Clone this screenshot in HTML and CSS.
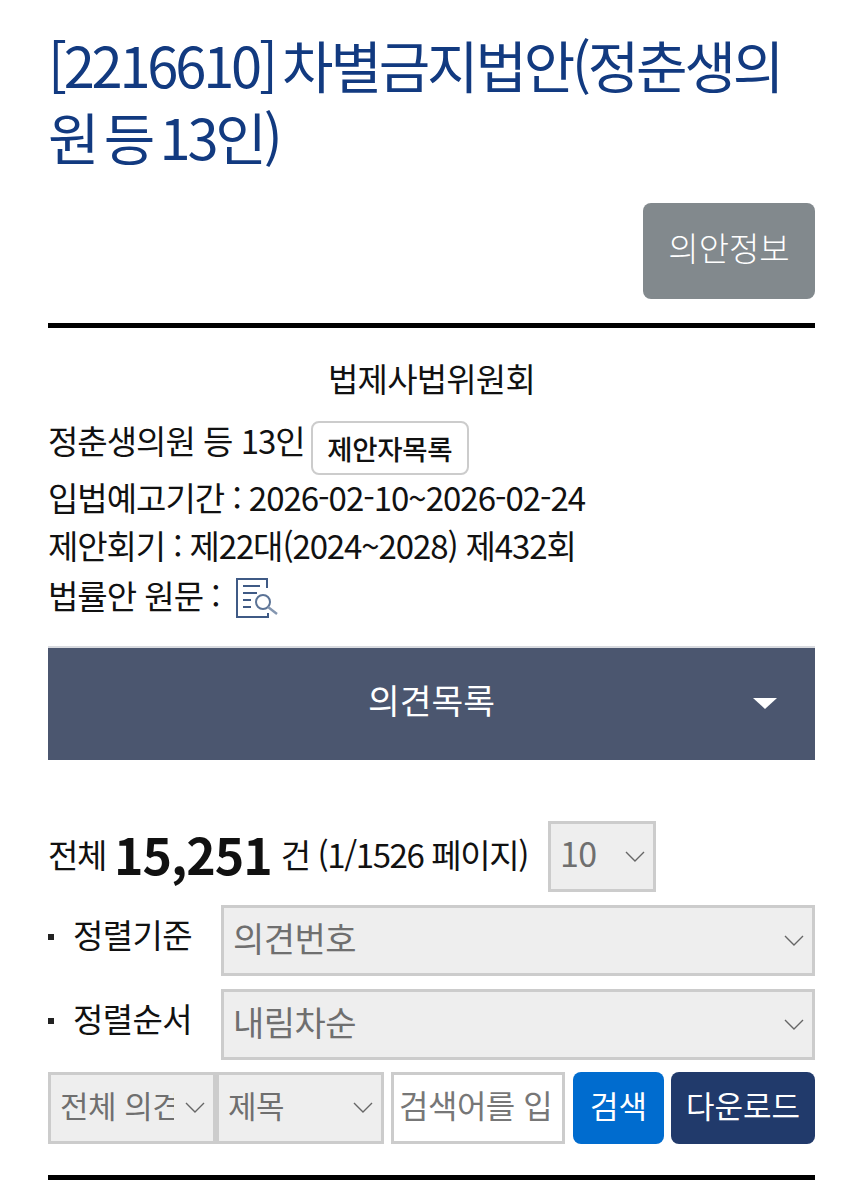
FILE: index.html
```html
<!DOCTYPE html>
<html lang="ko">
<head>
    <meta charset="UTF-8">
    <meta name="viewport" content="width=device-width, initial-scale=1.0">
    <title>차별금지법안</title>
    <link rel="stylesheet" href="styles.css">
</head>
<body>
    <div class="container">
        <h1 class="bill-title">[2216610] 차별금지법안(정춘생의원 등 13인)</h1>
        <div class="title-actions">
            <a class="btn-info">의안정보</a>
        </div>
        <div class="bill-summary">
            <p class="committee">법제사법위원회</p>
            <p class="row-proposer">정춘생의원 등 13인 <button class="btn-proposers">제안자목록</button></p>
            <p class="row-period">입법예고기간 : 2026-02-10~2026-02-24</p>
            <p class="row-session">제안회기 : 제22대(2024~2028) 제432회</p>
            <p class="row-source">법률안 원문 :
                <svg class="doc-icon" width="42" height="40" viewBox="0 0 42 40" fill="none">
                    <path d="M31 10V1H1v38h31v-4" stroke="#3f5a85" stroke-width="2"/>
                    <path d="M7 8h17M7 15h14M7 22h8M7 29h8" stroke="#3f5a85" stroke-width="2"/>
                    <circle cx="27" cy="24" r="7" stroke="#5b7396" stroke-width="2"/>
                    <path d="M32 29l9 7" stroke="#8496b0" stroke-width="2.4"/>
                </svg>
            </p>
        </div>
        <div class="opinion-bar">
            <span>의견목록</span>
            <i class="bar-arrow"></i>
        </div>
        <div class="total-row">
            <span class="total-text">전체</span>
            <strong class="total-count">15,251</strong>
            <span class="total-text">건 (1/1526 페이지)</span>
            <select class="field field-size"><option>10</option></select>
        </div>
        <div class="sort-row">
            <label class="sort-label">정렬기준</label>
            <select class="field field-wide"><option>의견번호</option></select>
        </div>
        <div class="sort-row">
            <label class="sort-label">정렬순서</label>
            <select class="field field-wide"><option>내림차순</option></select>
        </div>
        <div class="search-row">
            <select class="field field-kind"><option>전체 의견</option></select>
            <select class="field field-target"><option>제목</option></select>
            <input class="field field-query" type="text" placeholder="검색어를 입력하세요">
            <button class="btn-search">검색</button>
            <button class="btn-download">다운로드</button>
        </div>
        <div class="bottom-rule"></div>
    </div>
</body>
</html>
```

FILE: styles.css
```css
* {
    box-sizing: border-box;
}
body {
    margin: 0;
    background: #fff;
    color: #111;
    font-family: "Noto Sans CJK KR", "Noto Sans", sans-serif;
}
p {
    margin: 0;
}
.container {
    padding: 28px 48px 0;
    height: 1200px;
    overflow: hidden;
}
.bill-title {
    margin: 0;
    font-size: 56px;
    font-weight: 400;
    line-height: 72px;
    letter-spacing: -3.2px;
    word-spacing: -5px;
    color: #123a80;
}
.title-actions {
    display: flex;
    justify-content: flex-end;
    margin-top: 31px;
}
.btn-info {
    width: 172px;
    height: 96px;
    padding-bottom: 8px;
    display: flex;
    align-items: center;
    justify-content: center;
    background: #82898d;
    border-radius: 8px;
    color: #fff;
    font-size: 33px;
    font-weight: 300;
}
.bill-summary {
    margin-top: 24px;
    border-top: 5px solid #000;
    padding-top: 26px;
    font-size: 33px;
    letter-spacing: -1px;
}
.committee {
    text-align: center;
    line-height: 48px;
    letter-spacing: -0.8px;
    margin-bottom: 12px;
}
.row-proposer {
    display: flex;
    align-items: center;
    gap: 6px;
    height: 52px;
}
.btn-proposers {
    width: 158px;
    height: 54px;
    margin-top: 16px;
    background: #fff;
    border: 2px solid #ccc;
    border-radius: 8px;
    font-family: inherit;
    font-size: 27.5px;
    font-weight: 500;
    letter-spacing: -0.3px;
    color: #111;
    padding: 0;
}
.row-period, .row-session {
    line-height: 48px;
}
.row-period {
    margin-top: 7px;
}
.row-session {
    letter-spacing: -1.1px;
}
.row-source {
    display: flex;
    align-items: center;
    gap: 16px;
    height: 52px;
}
.doc-icon {
    margin-top: 6px;
}
.opinion-bar {
    position: relative;
    height: 114px;
    margin-top: 25px;
    padding-bottom: 10px;
    display: flex;
    align-items: center;
    justify-content: center;
    background: #4b566f;
    border-top: 2px solid #d8dadf;
    color: #fff;
    font-size: 34.5px;
}
.bar-arrow {
    position: absolute;
    right: 38px;
    top: 50px;
    width: 0;
    height: 0;
    border-left: 12px solid transparent;
    border-right: 12px solid transparent;
    border-top: 11px solid #fff;
}
.field {
    height: 71px;
    border: 3px solid #ccc;
    background-color: #eee;
    color: #6f6f6f;
    font-family: inherit;
    font-size: 34px;
    letter-spacing: -0.5px;
    border-radius: 0;
    appearance: none;
    padding: 0 9px 7px;
    background-repeat: no-repeat;
    background-image: url("data:image/svg+xml,%3Csvg xmlns='http://www.w3.org/2000/svg' width='20' height='12'%3E%3Cpath d='M1 1l9 9 9-9' fill='none' stroke='%23666' stroke-width='1.4'/%3E%3C/svg%3E");
    background-position: right 8px center;
}
.total-row {
    display: flex;
    align-items: center;
    height: 71px;
    margin-top: 61px;
    font-size: 33px;
    letter-spacing: -1.4px;
}
.total-text {
    margin-bottom: 6px;
}
.total-count {
    font-size: 50px;
    line-height: 60px;
    font-weight: 700;
    letter-spacing: -1px;
    margin: 0 9px 8px 8px;
}
.field-size {
    width: 108px;
    margin-left: 20px;
    padding-bottom: 8px;
}
.sort-row {
    display: flex;
    align-items: center;
    margin-top: 13px;
}
.sort-label {
    width: 173px;
    margin-bottom: 14px;
    padding-left: 25px;
    position: relative;
    font-size: 33px;
    letter-spacing: -0.6px;
}
.sort-label::before {
    content: "";
    position: absolute;
    left: 0;
    top: 24px;
    width: 6px;
    height: 6px;
    background: #222;
}
.field-wide {
    flex: 1;
}
.search-row {
    display: flex;
    margin-top: 12px;
}
.search-row .field {
    height: 72px;
}
.field-kind {
    width: 168px;
    padding: 0 39px 8px 9px;
    font-size: 31px;
}
.field-target {
    width: 168px;
    padding: 0 9px 8px;
    font-size: 31px;
}
.field-query {
    width: 174px;
    margin-left: 7px;
    background: #fff;
    padding: 0 8px 8px 5px;
    font-size: 32px;
}
.field-query::placeholder {
    color: #777;
}
.btn-search, .btn-download {
    height: 72px;
    border: 0;
    border-radius: 8px;
    color: #fff;
    font-family: inherit;
    font-size: 31px;
    padding: 0 0 8px;
}
.btn-search {
    width: 91px;
    margin-left: 8px;
    background: #006ccf;
}
.btn-download {
    width: 144px;
    margin-left: 7px;
    background: #213a6b;
}
.bottom-rule {
    margin-top: 31px;
    border-top: 5px solid #000;
}
```
